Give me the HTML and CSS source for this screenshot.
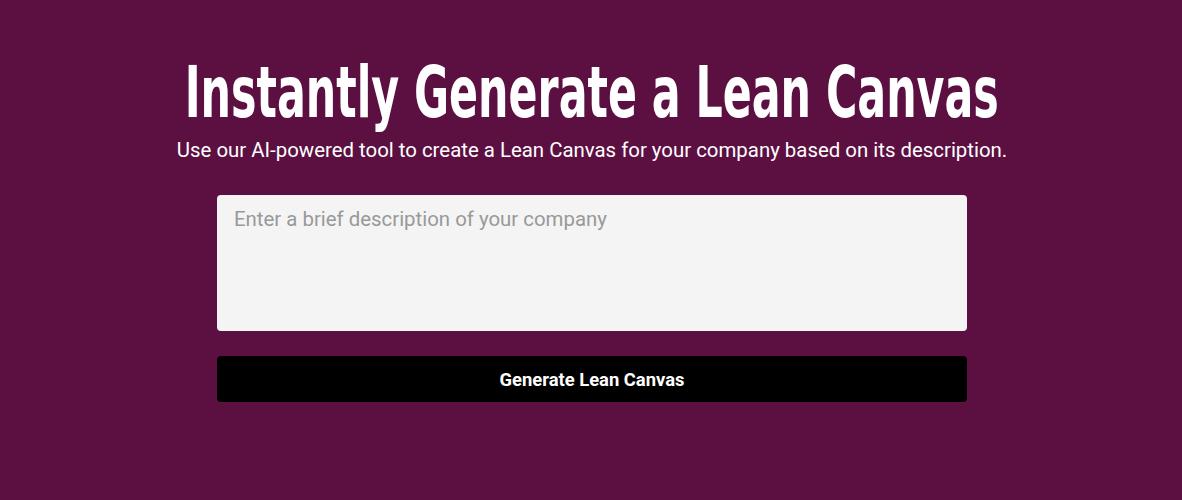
FILE: index.html
```html
<!DOCTYPE html>
<html>
<head>
    <title>Lean Canvas Generator</title>
    <link rel="stylesheet" href="styles.css">
</head>
<body>
    <div class="hero">
        <h1 class="title">Instantly Generate a Lean Canvas</h1>
        <p class="subtitle">Use our AI-powered tool to create a Lean Canvas for your company based on its description.</p>

        <form class="generate-form" onsubmit="return false;">
            <textarea id="description" placeholder="Enter a brief description of your company"></textarea>
            <button type="submit">Generate Lean Canvas</button>
        </form>
    </div>
</body>
</html>
```

FILE: styles.css
```css
body {
    margin: 0;
    background: #5c1042;
    font-family: Roboto, "Liberation Sans", sans-serif;
    color: white;
}
.hero {
    display: flex;
    flex-direction: column;
    align-items: center;
    padding: 52px 0 0 2px;
}
.title {
    margin: 0;
    font-family: "DejaVu Sans Condensed", sans-serif;
    font-weight: bold;
    font-size: 72px;
    line-height: 80px;
    white-space: nowrap;
    transform: scaleX(0.66);
}
.subtitle {
    margin: 4px 0 0;
    font-size: 20.4px;
    line-height: 28px;
}
.generate-form {
    width: 750px;
    margin-top: 31px;
    display: flex;
    flex-direction: column;
    gap: 25px;
}
textarea {
    height: 136px;
    box-sizing: border-box;
    padding: 10px 17px;
    border: none;
    border-radius: 4px;
    background: #f4f4f4;
    font-family: Roboto, sans-serif;
    font-size: 20.4px;
    line-height: 28px;
    resize: none;
}
textarea::placeholder {
    color: #999;
}
button {
    height: 46px;
    border: none;
    border-radius: 4px;
    background: black;
    color: white;
    font-family: Roboto, sans-serif;
    font-weight: bold;
    font-size: 18.4px;
    cursor: pointer;
}
```
